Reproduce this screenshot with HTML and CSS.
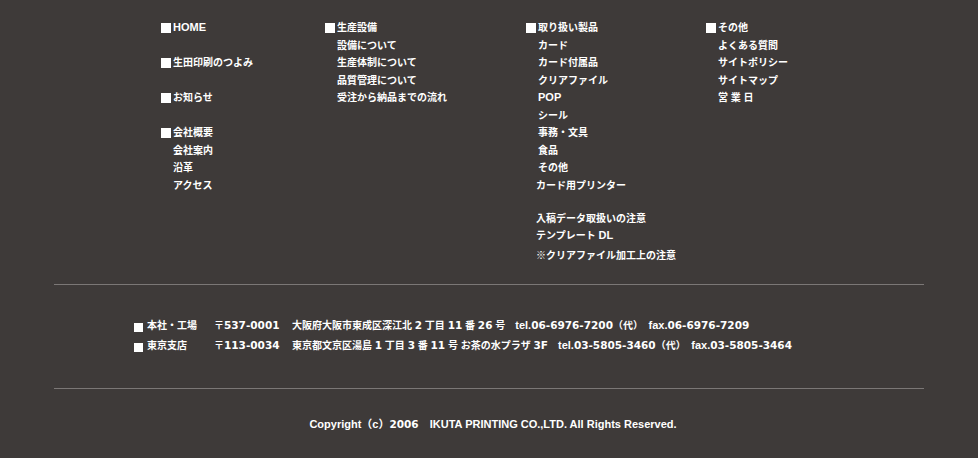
FILE: index.html
```html
<!DOCTYPE html>
<html lang="ja">
<head>
    <meta charset="UTF-8">
    <meta name="viewport" content="width=device-width, initial-scale=1.0">
    <title>生田印刷 フッター</title>
    <link rel="stylesheet" href="styles.css">
</head>
<body>

    <div class="footer">

        <!-- Site map -->
        <div class="sitemap">
            <div class="col">
                <ul class="group">
                    <li class="head"><span class="en">HOME</span></li>
                </ul>
                <ul class="group">
                    <li class="head">生田印刷のつよみ</li>
                </ul>
                <ul class="group">
                    <li class="head">お知らせ</li>
                </ul>
                <ul class="group">
                    <li class="head">会社概要</li>
                    <li class="sub">会社案内</li>
                    <li class="sub">沿革</li>
                    <li class="sub">アクセス</li>
                </ul>
            </div>

            <div class="col">
                <ul class="group">
                    <li class="head">生産設備</li>
                    <li class="sub">設備について</li>
                    <li class="sub">生産体制について</li>
                    <li class="sub">品質管理について</li>
                    <li class="sub">受注から納品までの流れ</li>
                </ul>
            </div>

            <div class="col">
                <ul class="group">
                    <li class="head">取り扱い製品</li>
                    <li class="sub">カード</li>
                    <li class="sub">カード付属品</li>
                    <li class="sub">クリアファイル</li>
                    <li class="sub"><span class="en">POP</span></li>
                    <li class="sub">シール</li>
                    <li class="sub">事務・文具</li>
                    <li class="sub">食品</li>
                    <li class="sub">その他</li>
                    <li class="extra">カード用プリンター</li>
                </ul>
                <ul class="group group-data">
                    <li class="extra">入稿データ取扱いの注意</li>
                    <li class="extra">テンプレート <span class="en">DL</span></li>
                    <li class="extra note">※クリアファイル加工上の注意</li>
                </ul>
            </div>

            <div class="col">
                <ul class="group">
                    <li class="head">その他</li>
                    <li class="sub">よくある質問</li>
                    <li class="sub">サイトポリシー</li>
                    <li class="sub">サイトマップ</li>
                    <li class="sub">営 業 日</li>
                </ul>
            </div>
        </div>

        <!-- Offices -->
        <div class="offices">
            <div class="office">
                <span class="office-name">本社・工場</span>
                <span class="office-zip">〒<span class="num">537-0001</span></span>
                <span class="office-addr">大阪府大阪市東成区深江北 <span class="num">2</span> 丁目 <span class="num">11</span> 番 <span class="num">26</span> 号　<span class="en">tel.</span><span class="num">06-6976-7200</span>（代）&nbsp; <span class="en">fax.</span><span class="num">06-6976-7209</span></span>
            </div>
            <div class="office">
                <span class="office-name">東京支店</span>
                <span class="office-zip">〒<span class="num">113-0034</span></span>
                <span class="office-addr">東京都文京区湯島 <span class="num">1</span> 丁目 <span class="num">3</span> 番 <span class="num">11</span> 号 お茶の水プラザ <span class="num">3F</span>　<span class="en">tel.</span><span class="num">03-5805-3460</span>（代）&nbsp; <span class="en">fax.</span><span class="num">03-5805-3464</span></span>
            </div>
        </div>

        <p class="copyright">Copyright（c）<span class="num">2006</span>　IKUTA PRINTING CO.,LTD. All Rights Reserved.</p>

    </div>

</body>
</html>
```

FILE: styles.css
```css
/* Page */
body {
    margin: 0;
    background-color: #3e3a39;
    color: #ffffff;
    font-family: "Liberation Sans", "Noto Sans CJK JP", sans-serif;
    font-size: 10px;
    font-weight: bold;
}

/* latin runs are set a little larger than the kanji */
.en {
    font-size: 11px;
    line-height: 1;
}

/* the figures are wide in the original */
.num {
    font-family: "DejaVu Sans", sans-serif;
    font-size: 10.5px;
    line-height: 1;
}

.footer {
    width: 870px;
    margin: 0 auto;
}

/* Site map */
.sitemap {
    display: grid;
    grid-template-columns: 164px 201px 180px auto;
    padding: 19px 0 20px 107px;
    border-bottom: 1px solid #7b7776;
}

.group {
    list-style: none;
    margin: 0 0 17.5px;
    padding: 0;
    line-height: 17.5px;
}

.group:last-child {
    margin-bottom: 0;
}

.group-data {
    margin-top: -2px;
}

.head,
.sub {
    padding-left: 12px;
}

.head {
    position: relative;
}

.head::before {
    content: "";
    position: absolute;
    left: 0;
    top: 4px;
    width: 10px;
    height: 10px;
    background-color: #ffffff;
}

.extra {
    padding-left: 10px;
}

.note {
    margin-top: 2px;
}

/* Offices */
.offices {
    padding: 31px 0 32px 80px;
    border-bottom: 1px solid #7b7776;
}

.office {
    display: flex;
    line-height: 20px;
}

.office-name {
    position: relative;
    width: 67px;
    padding-left: 13px;
}

.office-name::before {
    content: "";
    position: absolute;
    left: 0;
    top: 7px;
    width: 9px;
    height: 9px;
    background-color: #ffffff;
}

.office-zip {
    width: 78px;
}

.office-addr {
    white-space: nowrap;
}

/* Copyright */
.copyright {
    margin: 0;
    padding: 25px 0 24px 8px;
    font-size: 11px;
    line-height: 20px;
    text-align: center;
}

.copyright .num {
    font-size: 10.5px;
}
```
